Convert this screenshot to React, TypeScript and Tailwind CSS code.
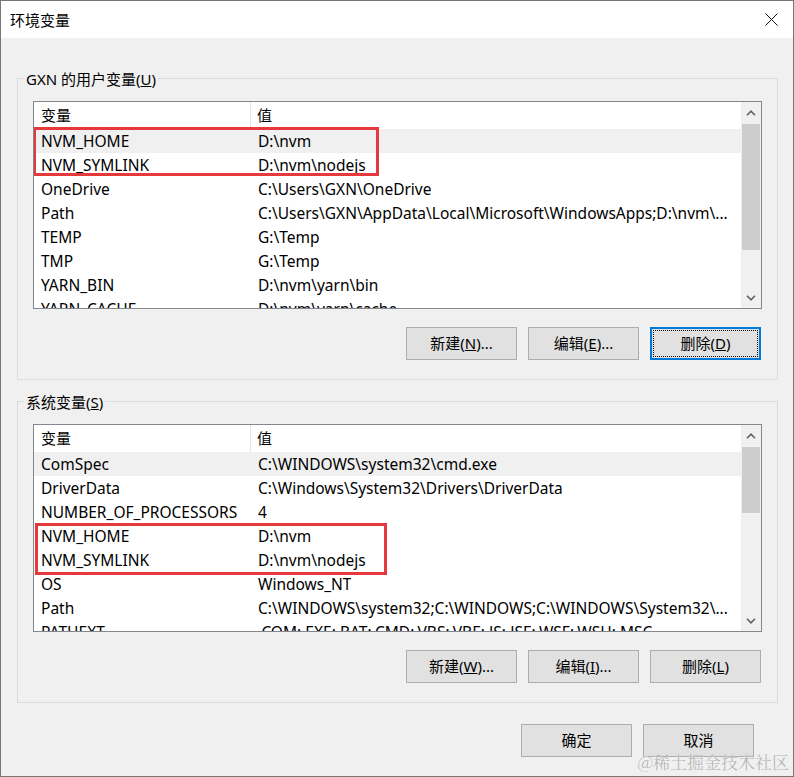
import React from "react";

type Row = { name: string; value: string };

const userRows: Row[] = [
  { name: "NVM_HOME", value: "D:\\nvm" },
  { name: "NVM_SYMLINK", value: "D:\\nvm\\nodejs" },
  { name: "OneDrive", value: "C:\\Users\\GXN\\OneDrive" },
  { name: "Path", value: "C:\\Users\\GXN\\AppData\\Local\\Microsoft\\WindowsApps;D:\\nvm\\..." },
  { name: "TEMP", value: "G:\\Temp" },
  { name: "TMP", value: "G:\\Temp" },
  { name: "YARN_BIN", value: "D:\\nvm\\yarn\\bin" },
  { name: "YARN_CACHE", value: "D:\\nvm\\yarn\\cache" },
];

const sysRows: Row[] = [
  { name: "ComSpec", value: "C:\\WINDOWS\\system32\\cmd.exe" },
  { name: "DriverData", value: "C:\\Windows\\System32\\Drivers\\DriverData" },
  { name: "NUMBER_OF_PROCESSORS", value: "4" },
  { name: "NVM_HOME", value: "D:\\nvm" },
  { name: "NVM_SYMLINK", value: "D:\\nvm\\nodejs" },
  { name: "OS", value: "Windows_NT" },
  { name: "Path", value: "C:\\WINDOWS\\system32;C:\\WINDOWS;C:\\WINDOWS\\System32\\..." },
  { name: "PATHEXT", value: ".COM;.EXE;.BAT;.CMD;.VBS;.VBE;.JS;.JSE;.WSF;.WSH;.MSC" },
];

function ChevronUp() {
  return (
    <svg width="10" height="6" viewBox="0 0 10 6">
      <polyline points="1,5.2 5,1.2 9,5.2" fill="none" stroke="#606060" strokeWidth="1.6" />
    </svg>
  );
}

function ChevronDown() {
  return (
    <svg width="10" height="6" viewBox="0 0 10 6">
      <polyline points="1,0.8 5,4.8 9,0.8" fill="none" stroke="#606060" strokeWidth="1.6" />
    </svg>
  );
}

function VarList({
  rows,
  thumbTop,
  thumbHeight,
  box,
}: {
  rows: Row[];
  thumbTop: number;
  thumbHeight: number;
  box: { left: number; top: number; width: number; height: number };
}) {
  return (
    <div className="relative h-[208px] border border-[#828790] bg-white flex overflow-hidden">
      <div className="flex-1 flex flex-col overflow-hidden">
        <div className="h-[27px] shrink-0 flex items-center">
          <div className="w-[217px] h-full flex items-center pl-[7px] border-r border-[#e5e5e5]">变量</div>
          <div className="pl-[6px]">值</div>
        </div>
        {rows.map((r, i) => (
          <div
            key={i}
            className={
              "h-[24px] shrink-0 flex items-center whitespace-nowrap text-[15.5px] leading-[22px] " +
              (i === 0 ? "bg-[#f0f0f0]" : "bg-white")
            }
          >
            <div className="w-[217px] shrink-0 pl-[7px] overflow-hidden">{r.name}</div>
            <div className="pl-[7px] overflow-hidden">{r.value}</div>
          </div>
        ))}
      </div>
      <div className="w-[20px] shrink-0 bg-[#f0f0f0] flex flex-col">
        <div className="h-[21px] shrink-0 flex items-center justify-center">
          <ChevronUp />
        </div>
        <div className="flex-1 relative">
          <div
            className="absolute left-[1px] right-[1px] bg-[#cdcdcd]"
            style={{ top: thumbTop, height: thumbHeight }}
          />
        </div>
        <div className="h-[21px] shrink-0 flex items-center justify-center">
          <ChevronDown />
        </div>
      </div>
      <div
        className="absolute border-[3px] border-[#e5393c] pointer-events-none"
        style={{ left: box.left, top: box.top, width: box.width, height: box.height }}
      />
    </div>
  );
}

function Btn({ children, focused }: { children: React.ReactNode; focused?: boolean }) {
  return (
    <div
      className={
        "w-[111px] h-[33px] flex items-center justify-center bg-[#e1e1e1] " +
        (focused
          ? "border-2 border-[#0078d7] outline-1 outline-dotted outline-black outline-offset-[-4px]"
          : "border border-[#adadad]")
      }
    >
      {children}
    </div>
  );
}

export default function App() {
  return (
    <div className="relative w-[794px] h-[777px] border border-[#777777] bg-[#f0f0f0] flex flex-col text-[15px] text-black font-['Noto_Sans','Noto_Sans_CJK_SC',sans-serif] overflow-hidden">
      <div className="h-[37px] shrink-0 bg-white flex items-center justify-between pl-[9px] pr-[15px]">
        <span className="leading-[20px]">环境变量</span>
        <svg width="13" height="13" viewBox="0 0 13 13">
          <line x1="0.5" y1="0.5" x2="12.5" y2="12.5" stroke="#111" strokeWidth="1" />
          <line x1="12.5" y1="0.5" x2="0.5" y2="12.5" stroke="#111" strokeWidth="1" />
        </svg>
      </div>

      <div className="flex flex-col pl-[16px] pr-[15px]">
        <div className="mt-[40px] border border-[#dcdcdc] flex flex-col px-[15px] pb-[19px]">
          <div className="-mt-[10px] -ml-[9px] self-start bg-[#f0f0f0] px-[2px] leading-[20px]">
            GXN 的用户变量(<span className="underline">U</span>)
          </div>
          <div className="mt-[12px]">
            <VarList rows={userRows} thumbTop={1} thumbHeight={126} box={{ left: -1, top: 25, width: 346, height: 49 }} />
          </div>
          <div className="mt-[18px] flex justify-end gap-[11px] pr-[1px]">
            <Btn>
              新建(<span className="underline">N</span>)...
            </Btn>
            <Btn>
              编辑(<span className="underline">E</span>)...
            </Btn>
            <Btn focused>
              删除(<span className="underline">D</span>)
            </Btn>
          </div>
        </div>

        <div className="mt-[21px] border border-[#dcdcdc] flex flex-col px-[15px] pb-[19px]">
          <div className="-mt-[10px] -ml-[9px] self-start bg-[#f0f0f0] px-[2px] leading-[20px]">
            系统变量(<span className="underline">S</span>)
          </div>
          <div className="mt-[12px]">
            <VarList rows={sysRows} thumbTop={1} thumbHeight={66} box={{ left: 1, top: 98, width: 352, height: 52 }} />
          </div>
          <div className="mt-[18px] flex justify-end gap-[11px] pr-[1px]">
            <Btn>
              新建(<span className="underline">W</span>)...
            </Btn>
            <Btn>
              编辑(<span className="underline">I</span>)...
            </Btn>
            <Btn>
              删除(<span className="underline">L</span>)
            </Btn>
          </div>
        </div>

        <div className="mt-[21px] flex justify-end gap-[11px] pr-[24px]">
          <Btn>确定</Btn>
          <Btn>取消</Btn>
        </div>
      </div>

      <div className="absolute right-[4px] bottom-[4px] leading-[20px] text-[17px] text-[#b5b5b5] font-['Noto_Serif_CJK_SC','Noto_Sans_CJK_SC',serif] [text-shadow:0_0_1px_#ffffff]">
        @稀土掘金技术社区
      </div>
    </div>
  );
}
